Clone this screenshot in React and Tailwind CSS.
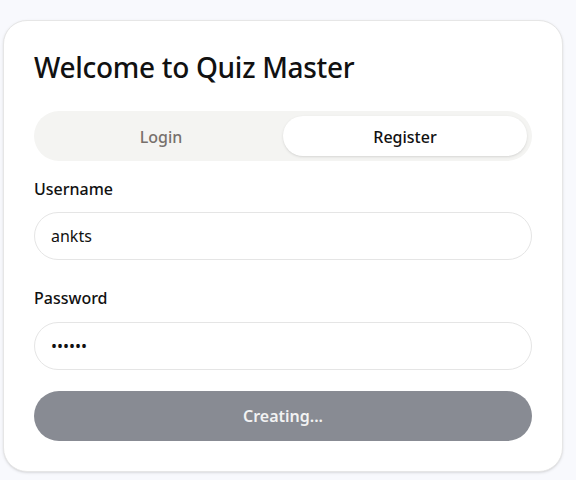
import React, { useState } from "react";

const App = () => {
  const [tab, setTab] = useState("register");
  const [username, setUsername] = useState("ankts");
  const [password, setPassword] = useState("123456");

  return (
    <div className="min-h-[480px] bg-[#f8f9fd] pt-5 font-['Noto_Sans',sans-serif]">
      <div className="ml-[3px] w-[560px] rounded-[24px] border border-[#e6e6e6] bg-white px-[30px] pt-[28px] pb-[30px] shadow-sm">
        <h1 className="text-[28px] leading-[36px] font-medium text-[#111111] tracking-[-0.3px]">
          Welcome to Quiz Master
        </h1>

        {/* tabs */}
        <div className="mt-[26px] grid grid-cols-2 rounded-full bg-[#f4f4f2] p-[5px]">
          <button
            onClick={() => setTab("login")}
            className={`h-10 rounded-full pt-[2px] text-[16px] font-medium ${
              tab === "login" ? "bg-white text-[#111] shadow-sm" : "text-[#77706c]"
            }`}
          >
            Login
          </button>
          <button
            onClick={() => setTab("register")}
            className={`h-10 rounded-full pt-[2px] text-[16px] font-medium ${
              tab === "register" ? "bg-white text-[#111] shadow-sm" : "text-[#77706c]"
            }`}
          >
            Register
          </button>
        </div>

        <form onSubmit={(e) => e.preventDefault()}>
          <label className="mt-[16px] block text-[16px] leading-6 font-medium text-[#111]">
            Username
          </label>
          <input
            value={username}
            onChange={(e) => setUsername(e.target.value)}
            className="mt-[11px] block h-12 w-full rounded-full border border-[#e5e5e5] px-4 text-[16px] text-[#111] outline-none"
          />

          <label className="mt-[26px] block text-[16px] leading-6 font-medium text-[#111]">
            Password
          </label>
          <input
            type="password"
            value={password}
            onChange={(e) => setPassword(e.target.value)}
            className="mt-[12px] block h-12 w-full rounded-full border border-[#e5e5e5] px-4 text-[16px] text-[#111] outline-none"
          />

          <button
            disabled
            className="mt-[21px] h-[50px] w-full rounded-full bg-[#888b93] text-[16px] font-semibold text-[#f2f2f2]"
          >
            Creating...
          </button>
        </form>
      </div>
    </div>
  );
};

export default App;
